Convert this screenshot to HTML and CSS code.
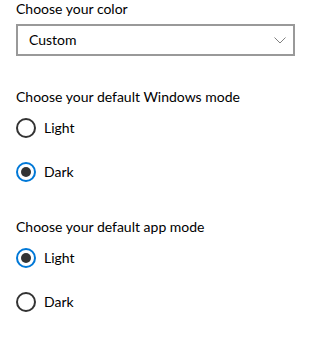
FILE: index.html
```html
<!DOCTYPE html>
<html lang="en">
<head>
<meta charset="utf-8">
<link rel="stylesheet" href="styles.css">
</head>
<body>
<main class="page">
  <section class="group group-color">
    <h2 class="heading">Choose your color</h2>
    <div class="select">
      <span class="select-value">Custom</span>
      <svg class="chevron" width="12" height="7" viewBox="0 0 12 7"><path d="M0.5 0.5 L6 6 L11.5 0.5" fill="none" stroke="#808080" stroke-width="1"/></svg>
    </div>
  </section>

  <section class="group">
    <h2 class="heading">Choose your default Windows mode</h2>
    <div class="radios">
      <label class="radio"><span class="dot"></span><span class="label">Light</span></label>
      <label class="radio checked"><span class="dot"></span><span class="label">Dark</span></label>
    </div>
  </section>

  <section class="group">
    <h2 class="heading">Choose your default app mode</h2>
    <div class="radios">
      <label class="radio checked"><span class="dot"></span><span class="label">Light</span></label>
      <label class="radio"><span class="dot"></span><span class="label">Dark</span></label>
    </div>
  </section>
</main>
</body>
</html>
```

FILE: styles.css
```css
* { box-sizing: border-box; }
html, body { margin: 0; padding: 0; background: #fff; }
body {
  font-family: "Lato", "Noto Sans", "Liberation Sans", sans-serif;
  font-size: 14px;
  color: #000;
}
.page {
  padding: 0 0 0 16px;
  width: 329px;
  height: 339px;
  overflow: hidden;
}
.group { display: flex; flex-direction: column; }
.heading {
  margin: 0;
  font-size: 14px;
  font-weight: normal;
  line-height: 20px;
  height: 20px;
}
.group-color .heading { margin-top: -1px; }
.group + .group { margin-top: 31px; }
.group + .group + .group { margin-top: 35px; }
.select {
  margin-top: 5px;
  width: 279px;
  height: 32px;
  border: 2px solid #999;
  display: flex;
  align-items: center;
  justify-content: space-between;
  padding: 0 7px 0 11px;
}
.select-value { line-height: 20px; }
.chevron { display: block; }
.radios {
  display: flex;
  flex-direction: column;
  gap: 24px;
  margin-top: 11px;
}
.radio {
  display: flex;
  align-items: center;
  gap: 8px;
  height: 20px;
}
.dot {
  width: 20px;
  height: 20px;
  border-radius: 50%;
  border: 2px solid #333;
  display: flex;
  align-items: center;
  justify-content: center;
  flex: none;
}
.radio.checked .dot { border-color: #0078d7; }
.radio.checked .dot::after {
  content: "";
  width: 10px;
  height: 10px;
  border-radius: 50%;
  background: #333;
}
.label { line-height: 20px; }
```
